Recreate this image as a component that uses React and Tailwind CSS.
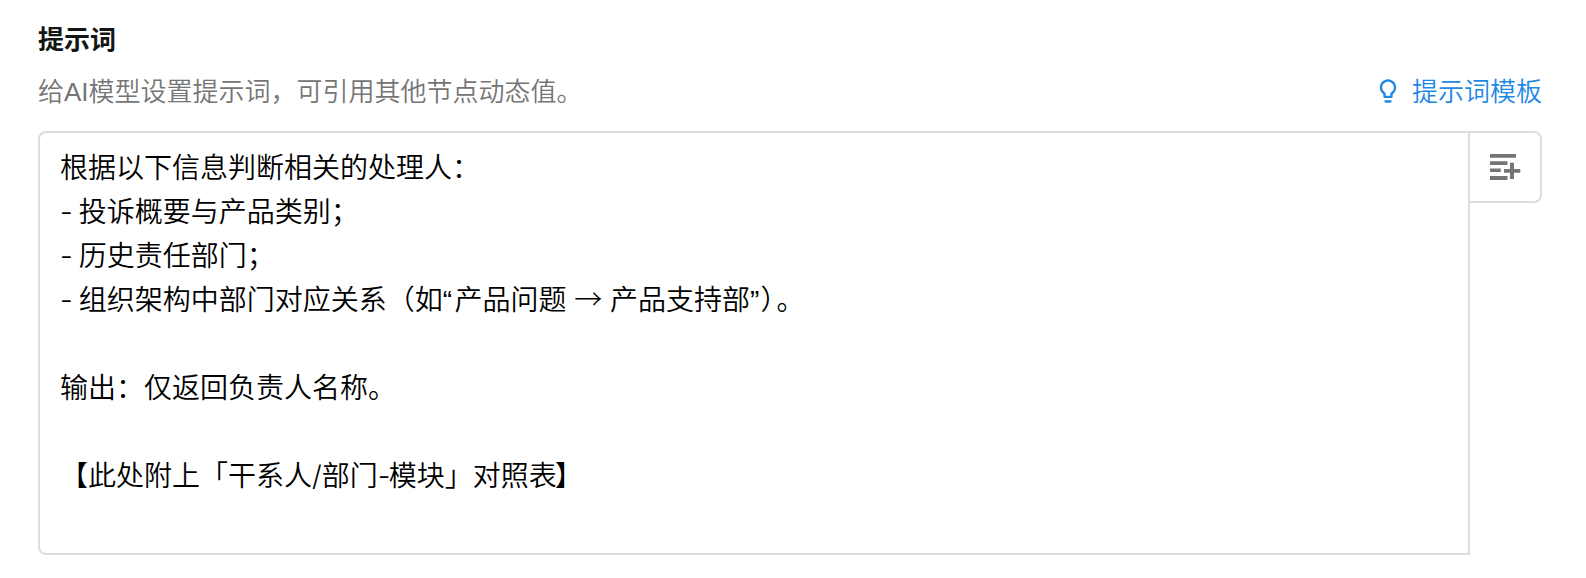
import React, { useState } from 'react';

const DEFAULT_PROMPT = [
    '根据以下信息判断相关的处理人：',
    '- 投诉概要与产品类别；',
    '- 历史责任部门；',
    '- 组织架构中部门对应关系（如“产品问题 → 产品支持部”）。',
    '',
    '输出：仅返回负责人名称。',
    '',
    '【此处附上「干系人/部门-模块」对照表】',
];

const BulbIcon = () => (
    <svg viewBox="0 0 24 24" className="mb-0.5 h-7 w-7" fill="currentColor">
        <path d="M9 21c0 .55.45 1 1 1h4c.55 0 1-.45 1-1v-1H9v1zm3-19C8.14 2 5 5.14 5 9c0 2.38 1.19 4.47 3 5.74V17c0 .55.45 1 1 1h6c.55 0 1-.45 1-1v-2.26c1.81-1.27 3-3.36 3-5.74 0-3.86-3.14-7-7-7zm2.85 11.1l-.85.6V16h-4v-2.3l-.85-.6A4.997 4.997 0 017 9c0-2.76 2.24-5 5-5s5 2.24 5 5c0 1.63-.8 3.16-2.15 4.1z" />
    </svg>
);

const InsertFieldIcon = () => (
    <svg viewBox="0 0 30 26" className="h-[26px] w-[30px] overflow-visible" fill="currentColor">
        <path d="M0 0h26v3.8H0zM0 7.3h17.5v3.7H0zM0 14.5h10.8v3.5H0zM0 22h17.5v4H0z" />
        <path d="M20 8.7h4v6.4h6.3v3.6H24V25h-4v-6.3h-6v-3.6h6z" />
    </svg>
);

const MARK_STYLES = {
    '→': "font-['Noto_Sans_CJK_SC',sans-serif] font-light leading-none",
    '-': "font-['Inter',sans-serif] leading-none tracking-[-1.8px]",
    '/': "font-['Inter',sans-serif] leading-none",
    '“': 'tracking-[2.5px]',
    '”': 'tracking-[1px]',
    '）': 'tracking-[2px]',
    '】': '-ml-0.5',
};

const PromptLine = ({ text }) => (
    <p className="h-11 whitespace-pre">
        {text.split(/([→/“”）】-])/).map((part, i) =>
            MARK_STYLES[part] ? (
                <span key={i} className={MARK_STYLES[part]}>{part}</span>
            ) : (
                part
            )
        )}
    </p>
);

const App = () => {
    const [lines] = useState(DEFAULT_PROMPT);

    return (
        <div className="h-[578px] w-[1586px] bg-white pt-[21px] pr-11 pl-[38px] font-['Liberation_Sans','Noto_Sans_CJK_SC',sans-serif]">
            <h3 className="text-[26px] leading-[38px] font-bold text-[#151515]">提示词</h3>

            <div className="mt-[13px] flex h-10 items-center justify-between text-[26px] leading-10 font-[350]">
                <p className="text-[#757575]">给AI模型设置提示词，可引用其他节点动态值。</p>
                <button className="flex items-center gap-2.5 text-[#1e88e5]">
                    <BulbIcon />
                    <span>提示词模板</span>
                </button>
            </div>

            <div className="mt-[19px] flex items-start">
                <div
                    lang="zh-CN"
                    className="h-[424px] w-[1432px] rounded-l-lg border-2 border-[#dddddd] py-[14px] pl-5 text-[28px] leading-[44px] font-[350] text-black"
                >
                    {lines.map((line, i) => (
                        <PromptLine key={i} text={line} />
                    ))}
                </div>
                <button className="flex h-[72px] w-[72px] items-center justify-center rounded-r-lg border-2 border-l-0 border-[#dddddd] text-[#757575]">
                    <InsertFieldIcon />
                </button>
            </div>
        </div>
    );
};

export default App;
